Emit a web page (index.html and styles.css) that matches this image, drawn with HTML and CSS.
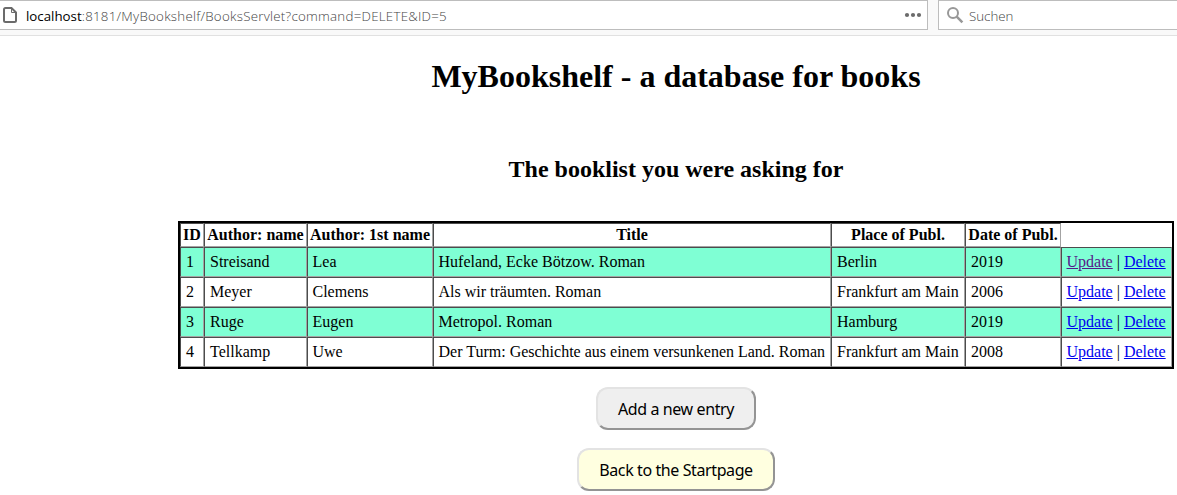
FILE: index.html
```html
<!DOCTYPE html>
<html lang="en">
<head>
<meta charset="utf-8">
<title>MyBookshelf</title>
<link rel="stylesheet" href="styles.css">
</head>
<body>
<header class="toolbar">
  <div class="field address">
    <svg class="page-icon" width="16" height="18" viewBox="0 0 16 18"><path d="M4.500 2H10.500L15 6.500V14.500Q15 16 13.500 16H4.500Q3 16 3 14.500V3.500Q3 2 4.500 2Z" fill="#fff" stroke="#6b6b6b" stroke-width="2"/><path d="M10.500 2V6.500H15" fill="none" stroke="#6b6b6b" stroke-width="1"/></svg>
    <span class="url"><span class="host">localhost</span>:8181/MyBookshelf/BooksServlet?command=DELETE&amp;ID=5</span>
    <svg class="dots" width="18" height="6" viewBox="0 0 18 6" fill="#6b6b6b"><circle cx="3" cy="3" r="2.100"/><circle cx="9" cy="3" r="2.100"/><circle cx="15" cy="3" r="2.100"/></svg>
  </div>
  <div class="field search">
    <svg class="lens" width="18" height="18" viewBox="0 0 18 18" fill="none" stroke="#989898"><circle cx="6" cy="7" r="5" stroke-width="2"/><path d="M9.700 10.700L15.400 16.400" stroke-width="2.500"/></svg>
    <span class="hint">Suchen</span>
  </div>
</header>
<main class="page">
  <h1>MyBookshelf - a database for books</h1>
  <h2>The booklist you were asking for</h2>
  <table class="books">
    <colgroup><col class="c-id"><col class="c-name"><col class="c-first"><col class="c-title"><col class="c-place"><col class="c-date"><col class="c-act"></colgroup>
    <tr class="head"><th>ID</th><th>Author: name</th><th>Author: 1st name</th><th>Title</th><th>Place of Publ.</th><th>Date of Publ.</th></tr>
    <tr class="odd"><td>1</td><td>Streisand</td><td>Lea</td><td>Hufeland, Ecke Bötzow. Roman</td><td>Berlin</td><td>2019</td><td><a class="seen" href="#">Update</a> | <a href="#">Delete</a></td></tr>
    <tr><td>2</td><td>Meyer</td><td>Clemens</td><td>Als wir träumten. Roman</td><td>Frankfurt am Main</td><td>2006</td><td><a href="#">Update</a> | <a href="#">Delete</a></td></tr>
    <tr class="odd"><td>3</td><td>Ruge</td><td>Eugen</td><td>Metropol. Roman</td><td>Hamburg</td><td>2019</td><td><a href="#">Update</a> | <a href="#">Delete</a></td></tr>
    <tr><td>4</td><td>Tellkamp</td><td>Uwe</td><td>Der Turm: Geschichte aus einem versunkenen Land. Roman</td><td>Frankfurt am Main</td><td>2008</td><td><a href="#">Update</a> | <a href="#">Delete</a></td></tr>
  </table>
  <button class="btn add">Add a new entry</button>
  <button class="btn back">Back to the Startpage</button>
</main>
</body>
</html>
```
FILE: styles.css
```css
* { box-sizing: border-box; }
body { margin: 0; background: #fff; color: #000; font-family: "Liberation Serif", serif; overflow: hidden; }
.toolbar { display: flex; gap: 10px; height: 36px; background: #f9f9f9; border-bottom: 1px solid #e1e1e1; font: 300 13.3px/18px "Open Sans", sans-serif; }
.field { height: 30px; background: #fff; border: 1px solid #bdbdbd; display: flex; align-items: center; }
.address { width: 928px; border-left: 0; padding: 0 5px 0 1px; color: #444; }
.page-icon { margin-right: 9px; }
.url { flex: 1; white-space: nowrap; letter-spacing: .26px; padding-top: 2px; }
.host { color: #000; font-weight: 400; letter-spacing: 0; }
.search { flex: 1; border-right: 0; padding-left: 8px; color: #444; }
.hint { margin-left: 4px; padding-top: 2px; }
.page { margin-left: 175px; display: flex; flex-direction: column; align-items: center; }
h1 { margin: 22px 0 0; font-size: 32px; line-height: 37px; white-space: nowrap; }
h2 { margin: 60px 0 0; font-size: 24px; line-height: 28px; white-space: nowrap; }
.books { margin-top: 38px; width: 996px; table-layout: fixed; border: 2px solid #000; border-spacing: 0; font-size: 16px; line-height: 18px; }
.c-id { width: 24px; }
.c-name { width: 103px; }
.c-first { width: 126px; }
.c-title { width: 398px; }
.c-place { width: 134px; }
.c-date { width: 96px; }
.c-act { width: 111px; }
.books tr { height: 30px; }
.books .head { height: 24px; }
.books th, .books td { border: 1px solid; border-color: #4c4c4c #a3a3a3 #a3a3a3 #4c4c4c; white-space: nowrap; }
.books th { padding: 0; }
.books td { padding: 0 0 0 5px; text-align: left; }
.books td:nth-child(3), .books td:nth-child(4), .books td:nth-child(7) { padding-left: 4.5px; }
.odd { background: #7fffd4; }
a { color: #0000ee; }
.seen { color: #551a8b; }
.btn { height: 43px; padding: 1px 0 0; border: 2px solid; border-color: #e3e3e3 #949494 #949494 #e3e3e3; border-radius: 12px; font: 16px/20px "Noto Sans", sans-serif; color: #000; white-space: nowrap; }
.add { width: 160px; margin-top: 18px; background: #efefef; letter-spacing: -.4px; }
.back { width: 198px; margin-top: 18px; background: #ffffe0; letter-spacing: -.4px; }
```
